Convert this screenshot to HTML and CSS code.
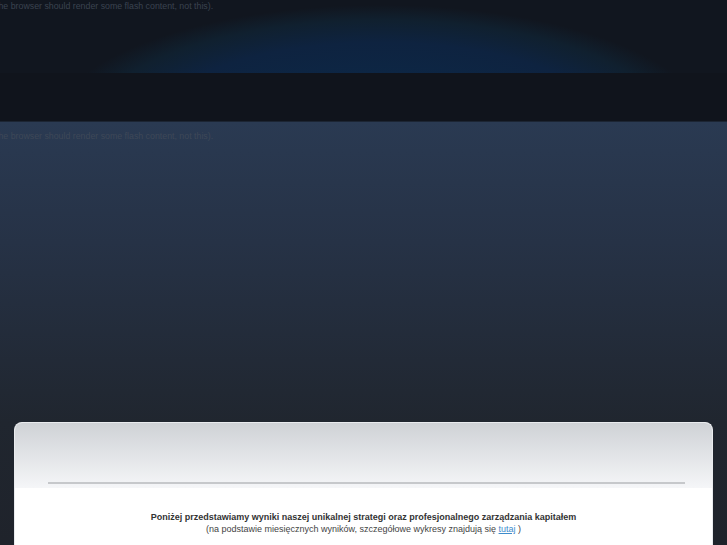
FILE: index.html
```html
<!DOCTYPE html>
<html>
<head>
<meta charset="utf-8">
<link rel="stylesheet" href="styles.css">
</head>
<body>
<div class="page">
  <div class="flash-top">
    <p class="noflash">the browser should render some flash content, not this).</p>
  </div>
  <div class="band"></div>
  <div class="main">
    <p class="noflash noflash-2">the browser should render some flash content, not this).</p>
    <div class="panel">
      <div class="panel-head">
        <div class="rule"></div>
      </div>
      <div class="panel-body">
        <p class="lead">Poniżej przedstawiamy wyniki naszej unikalnej strategi oraz profesjonalnego zarządzania kapitałem</p>
        <p class="sub">(na podstawie miesięcznych wyników, szczegółowe wykresy znajdują się <a href="#">tutaj</a> )</p>
      </div>
    </div>
  </div>
</div>
</body>
</html>
```
FILE: styles.css
```css
html, body {
  margin: 0;
  padding: 0;
  height: 100%;
  overflow: hidden;
}
body {
  background: #1f232b;
  font-family: "Liberation Sans", Arial, sans-serif;
}
.page {
  display: flex;
  flex-direction: column;
  height: 545px;
}
.flash-top {
  height: 73px;
  flex: none;
  background:
    radial-gradient(ellipse 330px 125px at 380px 130px, #0c2848 0%, #0d2644 45%, #0e2340 70%, #10202f 88%, rgba(17,22,31,0) 100%),
    #11161f;
  overflow: hidden;
}
.noflash {
  margin: 0;
  font-size: 8.8px;
  line-height: 12px;
  color: #3b4350;
  white-space: nowrap;
  margin-left: -4px;
}
.band {
  height: 48px;
  flex: none;
  background: #10141c;
  border-bottom: 1px solid #1c2533;
}
.main {
  flex: 1;
  display: flex;
  flex-direction: column;
  background: linear-gradient(#2a3a52 0px, #263246 120px, #20262f 300px, #1f232b 420px);
}
.noflash-2 {
  margin-top: 8px;
  color: #3e4858;
}
.panel {
  margin: auto 14px 0 14px;
  flex: none;
  height: 122px;
  border: 1px solid #e9ebee;
  border-bottom: none;
  border-radius: 8px 8px 0 0;
  background: #ffffff;
  overflow: hidden;
}
.panel-head {
  height: 65px;
  box-sizing: border-box;
  background: linear-gradient(#cfd2d6, #f5f6f8);
  display: flex;
  align-items: flex-end;
  padding: 0 27px 4px 33px;
}
.rule {
  flex: 1;
  height: 2px;
  background: #c6c8cb;
}
.panel-body {
  text-align: center;
  padding-top: 23px;
}
.lead {
  margin: 0;
  font-size: 9px;
  line-height: 12px;
  font-weight: bold;
  color: #333;
}
.sub {
  margin: 0;
  font-size: 9px;
  line-height: 12px;
  color: #444;
}
.sub a {
  color: #3d8ccc;
  text-decoration: underline;
}
```
